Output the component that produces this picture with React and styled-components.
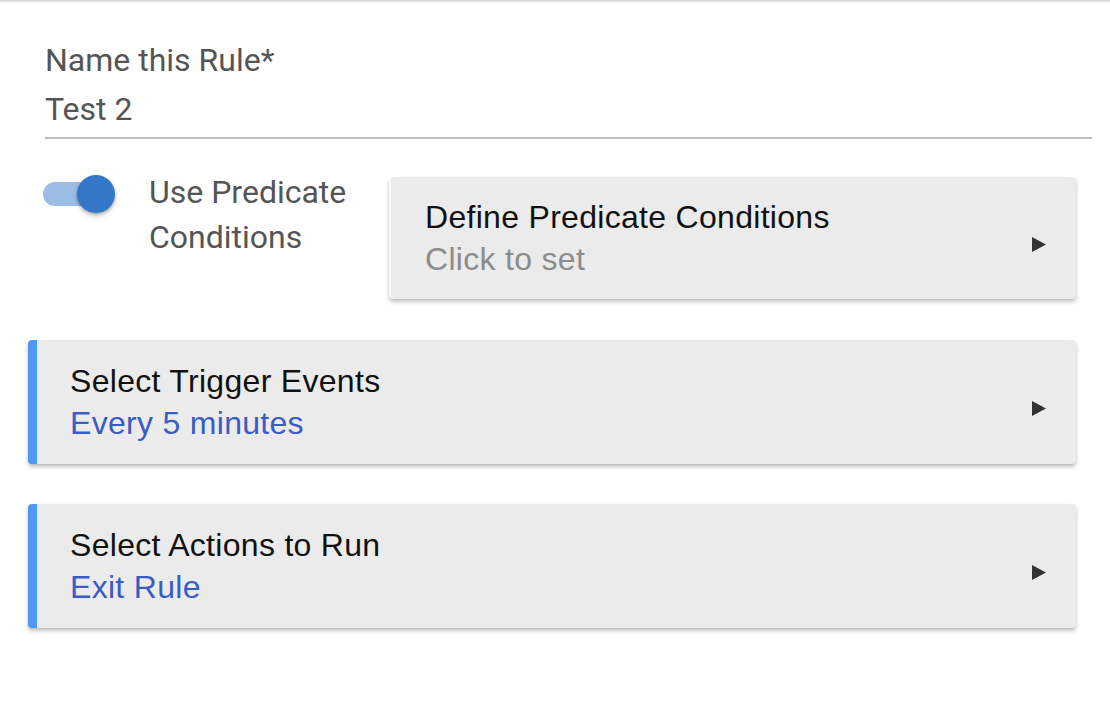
import React from "react";
import styled, { createGlobalStyle } from "styled-components";

const GlobalStyle = createGlobalStyle`
  html, body {
    margin: 0;
    padding: 0;
    background: #fff;
  }
  body {
    font-family: "Liberation Sans", Arial, sans-serif;
  }
`;

const Page = styled.div`
  position: relative;
  width: 1110px;
  min-height: 706px;
  background: #fff;
  padding-top: 40px;
  box-sizing: border-box;

  &::before {
    content: "";
    position: absolute;
    top: 0;
    left: 0;
    right: 0;
    height: 4px;
    background: linear-gradient(#cfcfcf, #f6f6f6 60%, #fff);
  }
`;

const Field = styled.div`
  margin: 0 18px 0 45px;
  padding-bottom: 8px;
  border-bottom: 2px solid #bdbdbd;
  font-family: Roboto, "Liberation Sans", sans-serif;
  color: #555;
`;

const FieldLabel = styled.div`
  font-size: 32px;
  line-height: 40px;
`;

const FieldValue = styled.div`
  font-size: 32px;
  line-height: 40px;
  margin-top: 9px;
`;

const PredicateRow = styled.div`
  display: flex;
  align-items: flex-start;
  margin: 31px 34px 0 43px;
`;

const Toggle = styled.div`
  position: relative;
  flex: none;
  width: 68px;
  height: 24px;
  margin-top: 12px;
  border-radius: 12px;
  background: #9bbde6;
`;

const Knob = styled.span`
  position: absolute;
  top: -7px;
  left: 34px;
  width: 38px;
  height: 38px;
  border-radius: 50%;
  background: #3476c8;
  box-shadow: 0 2px 3px rgba(0, 0, 0, 0.25), 0 3px 6px rgba(0, 0, 0, 0.12);
`;

const ToggleLabel = styled.div`
  flex: none;
  width: 240px;
  margin-left: 38px;
  font-family: Roboto, "Liberation Sans", sans-serif;
  font-size: 32px;
  line-height: 45px;
  color: #555;
`;

const Card = styled.div`
  display: flex;
  align-items: center;
  box-sizing: border-box;
  height: ${(p) => p.$height || 124}px;
  padding: 0 30px 0 ${(p) => (p.$accent ? 33 : 34)}px;
  background: #ebebeb;
  border-left: ${(p) => (p.$accent ? "9px solid #4a9af5" : "2px solid #fafafa")};
  border-radius: 4px;
  box-shadow: 0 3px 4px rgba(0, 0, 0, 0.22), 0 1px 2px rgba(0, 0, 0, 0.08);
`;

const PredicateCard = styled(Card)`
  flex: 1;
  margin-top: 7px;
`;

const BlockCard = styled(Card)`
  margin: ${(p) => p.$top}px 34px 0 28px;
`;

const CardText = styled.div`
  flex: 1;
  font-size: 32px;
  line-height: 42px;
  letter-spacing: 0.3px;
`;

const CardTitle = styled.div`
  color: #111;
`;

const CardSub = styled.div`
  color: ${(p) => (p.$muted ? "#8c8c8c" : "#3a5cc5")};
`;

const Arrow = styled.svg`
  flex: none;
  width: 14px;
  height: 15px;
  margin-top: 12px;
`;

const PlayArrow = () => (
  <Arrow viewBox="0 0 14 15">
    <polygon points="0,0 14,7.5 0,15" fill="#333" />
  </Arrow>
);

export default function App() {
  return (
    <>
      <GlobalStyle />
      <Page>
        <Field>
          <FieldLabel>Name this Rule*</FieldLabel>
          <FieldValue>Test 2</FieldValue>
        </Field>

        <PredicateRow>
          <Toggle>
            <Knob />
          </Toggle>
          <ToggleLabel>
            Use Predicate
            <br />
            Conditions
          </ToggleLabel>
          <PredicateCard $height={122}>
            <CardText>
              <CardTitle>Define Predicate Conditions</CardTitle>
              <CardSub $muted>Click to set</CardSub>
            </CardText>
            <PlayArrow />
          </PredicateCard>
        </PredicateRow>

        <BlockCard $accent $top={41}>
          <CardText>
            <CardTitle>Select Trigger Events</CardTitle>
            <CardSub>Every 5 minutes</CardSub>
          </CardText>
          <PlayArrow />
        </BlockCard>

        <BlockCard $accent $top={40}>
          <CardText>
            <CardTitle>Select Actions to Run</CardTitle>
            <CardSub>Exit Rule</CardSub>
          </CardText>
          <PlayArrow />
        </BlockCard>
      </Page>
    </>
  );
}
